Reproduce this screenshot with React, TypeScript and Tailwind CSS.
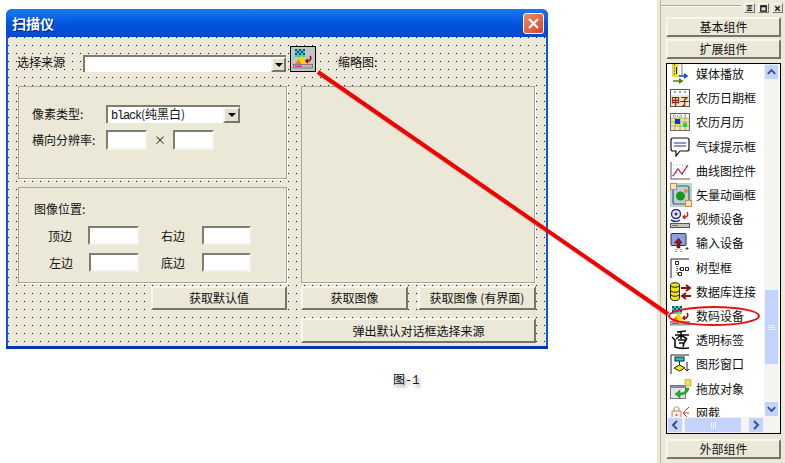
const font = "font-['Noto_Sans_CJK_SC','Liberation_Sans',sans-serif]"

function Sunken({ className }: { className: string }) {
  return <div className={`bg-white border-2 border-t-[#7f7d72] border-l-[#7f7d72] border-r-[#f4f2ea] border-b-[#f4f2ea] ${className}`} />
}

function Btn({ label, className }: { label: string; className: string }) {
  return (
    <div className={`flex items-center justify-center bg-[#ebe8d8] border-2 border-t-[#f7f6f0] border-l-[#f7f6f0] border-r-[#77756a] border-b-[#77756a] text-xs text-[#111] ${className}`}>
      {label}
    </div>
  )
}

function DropArrow({ className }: { className: string }) {
  return (
    <div className={`flex items-center justify-center bg-[#e4e1d2] border-2 border-t-[#f7f6f0] border-l-[#f7f6f0] border-r-[#77756a] border-b-[#77756a] ${className}`}>
      <div className="w-0 h-0 border-x-[4px] border-x-transparent border-t-[4px] border-t-black" />
    </div>
  )
}

function DeviceIcon({ size = 20 }: { size?: number }) {
  return (
    <svg width={size} height={size} viewBox="0 0 20 20">
      <rect x="2" y="0" width="10" height="8" fill="#22d3d3" />
      <path d="M2 0h2v2H2zM6 0h2v2H6zM10 0h2v2h-2zM4 2h2v2H4zM8 2h2v2H8zM2 4h2v2H2zM6 4h2v2H6zM10 4h2v2h-2z" fill="#2a4a5a" />
      <path d="M2 15 L9 6 L13 15 Z" fill="#ffd800" />
      <path d="M2 15 L6 10 L8 15 Z" fill="#f08020" />
      <path d="M17 7 q2 3 -1 5 h-3 m2 -2 l-2 2 l2 2" fill="none" stroke="#a01010" strokeWidth="1.6" />
      <rect x="0.500" y="15.500" width="19" height="3.500" fill="#b9b9b9" stroke="#555" strokeWidth="0.6" />
      <rect x="2" y="16.500" width="7" height="1.500" fill="#ff20c0" />
    </svg>
  )
}

function ListIcon({ name }: { name: string }) {
  if (name === 'media')
    return (
      <svg width="20" height="22" viewBox="0 0 20 22">
        <path d="M3 0h7l2 2v11H3z" fill="#fff" stroke="#555" strokeWidth="0.7" />
        <rect x="3" y="0" width="5" height="14" fill="#f5e60a" />
        <path d="M4 2h1M4 5h1M4 8h1M4 11h1M6.500 4v7" stroke="#222" />
        <path d="M9 13h7m-2-2l3 2-3 2" fill="none" stroke="#1a4fd8" strokeWidth="1.6" />
        <path d="M3 18h8m-2-2l3 2-3 2" fill="none" stroke="#5a7d10" strokeWidth="1.6" />
      </svg>
    )
  if (name === 'date')
    return (
      <svg width="20" height="18" viewBox="0 0 20 18">
        <rect x="0.500" y="0.500" width="19" height="17" fill="#f3e7c4" stroke="#555" />
        <rect x="1" y="1" width="18" height="5" fill="#fff" />
        <path d="M4 3h2M9 3h2M14 3h2" stroke="#1a3fb0" />
        <text x="10" y="15.500" textAnchor="middle" fontSize="9" fontWeight="700" fill="#8a1010" fontFamily="Noto Sans CJK SC">甲子</text>
      </svg>
    )
  if (name === 'month')
    return (
      <svg width="20" height="18" viewBox="0 0 20 18">
        <rect x="0.500" y="0.500" width="19" height="17" fill="#f5e98c" stroke="#666" />
        <rect x="1" y="1" width="18" height="4" fill="#fff" />
        <path d="M3 3h1M7 3h1M11 3h1M15 3h1" stroke="#1a3fb0" />
        <path d="M1 5h18M1 9h18M1 13h18M5 1v16M10 1v16M15 1v16" stroke="#8f8f8f" strokeWidth="0.7" />
        <rect x="5" y="6" width="5" height="5" fill="#1a2fd8" />
        <rect x="13" y="10" width="4" height="4" fill="#22d34a" />
      </svg>
    )
  if (name === 'balloon')
    return (
      <svg width="20" height="20" viewBox="0 0 20 20">
        <path d="M3 1h14q2 0 2 2v9q0 2-2 2H10l-4 5v-5H3q-2 0-2-2V3q0-2 2-2z" fill="#fff" stroke="#111" strokeWidth="1.200" />
        <path d="M4 6h12M4 9h12" stroke="#1a2fb0" strokeWidth="1.200" />
      </svg>
    )
  if (name === 'curve')
    return (
      <svg width="20" height="18" viewBox="0 0 20 18">
        <path d="M1 0v17h19" fill="none" stroke="#555" />
        <path d="M3 3h15M3 7h15M3 11h15" stroke="#bbb" strokeDasharray="1 2" />
        <path d="M3 14l5-7 4 5 6-9" fill="none" stroke="#e02020" strokeWidth="1.200" />
        <path d="M3 14l5-7M12 12l6-9" fill="none" stroke="#2040d0" strokeDasharray="1 3" strokeWidth="1.500" />
      </svg>
    )
  if (name === 'vector')
    return (
      <svg width="22" height="24" viewBox="0 0 22 24">
        <rect width="22" height="24" fill="#c6ccd0" />
        <path d="M5 3h12q2 0 2 2v14M17 21H5q-2 0-2-2V6" fill="none" stroke="#2a6a80" strokeWidth="1.200" />
        <rect x="0.500" y="0.500" width="6" height="6" fill="#e8e4d0" stroke="#d88a20" />
        <rect x="15.500" y="17.500" width="6" height="6" fill="#e8e4d0" stroke="#d88a20" />
        <circle cx="10.500" cy="13" r="4.500" fill="#129a1c" />
        <circle cx="16" cy="8" r="2" fill="#f08050" />
      </svg>
    )
  if (name === 'video')
    return (
      <svg width="20" height="20" viewBox="0 0 20 20">
        <circle cx="6" cy="5" r="4.500" fill="#e8e8f0" stroke="#1a2fa0" strokeWidth="1.400" />
        <circle cx="6" cy="5" r="1.500" fill="#333" />
        <path d="M1 11q5 3 9 0" fill="none" stroke="#1a2fa0" strokeWidth="1.500" />
        <path d="M17 3q2 3-1 5h-3m2-2l-2 2 2 2" fill="none" stroke="#c02010" strokeWidth="1.300" />
        <rect x="0.500" y="14.500" width="19" height="4" fill="#c4c4c4" stroke="#555" />
        <rect x="2" y="16" width="6" height="1" fill="#ff20c0" />
      </svg>
    )
  if (name === 'input')
    return (
      <svg width="20" height="20" viewBox="0 0 20 20">
        <rect x="1" y="0.500" width="15" height="12" rx="1" fill="#8f9ee8" stroke="#333" />
        <path d="M8.500 5l-4 5h2.500v5h3v-5H12z" fill="#a01010" stroke="#111" strokeWidth="0.500" />
        <path d="M6 16v1M6 18v1M11 16v1M11 18v1M17 14v3M15.500 15.500h3" stroke="#444" />
      </svg>
    )
  if (name === 'tree')
    return (
      <svg width="20" height="20" viewBox="0 0 20 20">
        <path d="M1 20V1h18" fill="none" stroke="#222" />
        <path d="M7 6v10M7 11h6M7 16h2" stroke="#222" strokeDasharray="1 1" />
        <path d="M5.500 3.500h3v3h-3zM10.500 9.500h3v3h-3zM15.500 9.500h3v3h-3zM8.500 14.500h3v3h-3z" fill="#fff" stroke="#222" />
      </svg>
    )
  if (name === 'db')
    return (
      <svg width="22" height="20" viewBox="0 0 22 20">
        <path d="M0.500 3v13c0 3.500 9 3.500 9 0V3z" fill="#f5e60a" stroke="#222" />
        <ellipse cx="5" cy="3" rx="4.500" ry="2.200" fill="#f5e60a" stroke="#222" />
        <path d="M0.500 8c0 3 9 3 9 0M0.500 12c0 3 9 3 9 0" fill="none" stroke="#222" />
        <path d="M11 6h8m-3-3l4 3-4 3" fill="none" stroke="#901010" strokeWidth="2" />
        <path d="M21 14h-8m3-3l-4 3 4 3" fill="none" stroke="#901010" strokeWidth="2" />
      </svg>
    )
  if (name === 'device') return <DeviceIcon />
  if (name === 'label')
    return (
      <svg width="20" height="20" viewBox="0 0 20 20">
        <path d="M7 2l9-1M11 1v8M5 5h14M11 5l-5 4M11 5l6 4M8 10h8l-2 3M2 7l3 3v7q4 2 14 1M9 13h5l-1 4" fill="none" stroke="#111" strokeWidth="1.600" />
      </svg>
    )
  if (name === 'window')
    return (
      <svg width="20" height="20" viewBox="0 0 20 20">
        <path d="M1 20V1h18" fill="none" stroke="#222" />
        <rect x="5" y="3" width="9" height="4" fill="#18c8c8" stroke="#222" />
        <path d="M9.500 7v4" stroke="#222" />
        <path d="M4 14l5.500-3 5.500 3-5.500 3z" fill="#f5e60a" stroke="#222" />
        <path d="M17 8v9m-2-2l2 2 2-2" fill="none" stroke="#222" />
      </svg>
    )
  if (name === 'drag')
    return (
      <svg width="22" height="20" viewBox="0 0 22 20">
        <rect x="0.500" y="6.500" width="15" height="13" fill="#e4e4e4" stroke="#777" />
        <rect x="1" y="7" width="14" height="2" fill="#7f8ea8" />
        <path d="M15 0h5l1 1v6h-6z" fill="#f5e040" stroke="#888" strokeWidth="0.600" />
        <path d="M16 9q0 5-6 5v-3l-5 4 5 4v-3q8 0 9-7z" fill="#28b028" stroke="#1a6a1a" strokeWidth="0.500" />
      </svg>
    )
  return (
    <svg width="20" height="18" viewBox="0 0 20 18">
      <path d="M2 7h9v9H2z" fill="#f5efe0" stroke="#b09060" />
      <path d="M4 7V4q2.500-3 5 0v3" fill="none" stroke="#b09060" />
      <circle cx="6.500" cy="11" r="1" fill="#b06020" />
      <path d="M19 3l-6 6h6M13 9l6 6" fill="none" stroke="#e03030" />
    </svg>
  )
}

const items = [
  { name: 'media', label: '媒体播放' },
  { name: 'date', label: '农历日期框' },
  { name: 'month', label: '农历月历' },
  { name: 'balloon', label: '气球提示框' },
  { name: 'curve', label: '曲线图控件' },
  { name: 'vector', label: '矢量动画框' },
  { name: 'video', label: '视频设备' },
  { name: 'input', label: '输入设备' },
  { name: 'tree', label: '树型框' },
  { name: 'db', label: '数据库连接' },
  { name: 'device', label: '数码设备' },
  { name: 'label', label: '透明标签' },
  { name: 'window', label: '图形窗口' },
  { name: 'drag', label: '拖放对象' },
  { name: 'net', label: '网截' },
]

const windowGlyphs = ['M2 2h6M3 4.500h4M2 7h6', 'M2 2h6v6H2zM2 3h6', 'M2.500 2.500l5 5M7.500 2.500l-5 5']

function ScrollBtn({ dir, className }: { dir: 'up' | 'down' | 'left' | 'right'; className: string }) {
  const d = { up: 'M3 9l4-4 4 4', down: 'M3 5l4 4 4-4', left: 'M9 3L5 7l4 4', right: 'M5 3l4 4-4 4' }[dir]
  return (
    <div className={`flex items-center justify-center rounded-[2px] bg-[#c3d3fb] border border-[#eef3ff] ${className}`}>
      <svg width="14" height="14" viewBox="0 0 14 14">
        <path d={d} fill="none" stroke="#3a4f8a" strokeWidth="2" />
      </svg>
    </div>
  )
}

function Field({ label, labelClass, inputClass }: { label: string; labelClass: string; inputClass: string }) {
  return (
    <div className="flex items-center">
      <span className={`text-xs ${labelClass}`}>{label}</span>
      <Sunken className={inputClass} />
    </div>
  )
}

export default function App() {
  return (
    <div className={`relative flex w-[785px] h-[463px] overflow-hidden bg-white text-[#111] ${font}`}>
      <div className="w-[657px] shrink-0 pl-[6px] pt-[9px]">
        {/* dialog */}
        <div className="w-[542px] h-[340px] flex flex-col rounded-t-[6px] overflow-hidden bg-[#0a58e0]">
          <div className="h-[28px] shrink-0 flex items-center justify-between pl-[6px] pr-[4px] bg-gradient-to-b from-[#1c78f2] via-[#0256de] to-[#0048cc]">
            <span className="text-sm font-bold text-white [text-shadow:1px_1px_0_#00258a]">扫描仪</span>
            <div className="w-[21px] h-[21px] rounded-[3px] border border-white bg-gradient-to-br from-[#ee8a6a] to-[#d8401c] flex items-center justify-center">
              <svg width="13" height="13" viewBox="0 0 13 13">
                <path d="M2 2l9 9M11 2l-9 9" stroke="#fff" strokeWidth="2.200" />
              </svg>
            </div>
          </div>
          <div className="mx-[2px] h-[309px] pl-[10px] bg-[#ebe8da] bg-[radial-gradient(circle_at_0.5px_0.5px,#111_0.5px,transparent_0.7px)] bg-[length:8px_8px]">
            {/* source row */}
            <div className="flex items-end h-[26px] mt-[9px]">
              <span className="w-[65px] h-[18px] -ml-[1px] text-xs">选择来源</span>
              <div className="flex w-[203px] h-[17px] ml-[1px] bg-white border-t-2 border-l-2 border-t-[#7f7d72] border-l-[#7f7d72] justify-end">
                <DropArrow className="w-[15px] h-[15px]" />
              </div>
              <div className="ml-[4px] w-[26px] h-[26px] border border-black bg-[#c4c4c4] flex items-center justify-center">
                <DeviceIcon />
              </div>
              <span className="ml-[22px] h-[18px] text-xs">缩略图:</span>
            </div>
            {/* middle */}
            <div className="flex gap-[14px] mt-[14px]">
              <div className="w-[269px] flex flex-col gap-[8px]">
                <div className="h-[93px] pl-[13px] pt-[18px] bg-[#ebe8d8] border border-[#a8a698] shadow-[1px_1px_0_#fff]">
                  <div className="flex items-center h-[18px]">
                    <span className="w-[74px] text-xs">像素类型:</span>
                    <div className="flex items-center justify-between w-[134px] h-[18px] bg-white border-t-2 border-l-2 border-t-[#7f7d72] border-l-[#7f7d72] pl-[3px] text-xs">
                      <span><span className="font-['Liberation_Mono',monospace] tracking-[-1.2px]">black</span>(纯黑白)</span>
                      <DropArrow className="w-[17px] h-[16px]" />
                    </div>
                  </div>
                  <div className="flex items-center h-[20px] mt-[7px]">
                    <span className="w-[74px] text-xs">横向分辨率:</span>
                    <Sunken className="w-[41px] h-[20px]" />
                    <span className="w-[26px] text-center text-xs text-[#333]">×</span>
                    <Sunken className="w-[41px] h-[20px]" />
                  </div>
                </div>
                <div className="h-[96px] pl-[15px] pt-[12px] bg-[#ebe8d8] border border-[#a8a698] shadow-[1px_1px_0_#fff]">
                  <div className="text-xs leading-[18px]">图像位置:</div>
                  <div className="flex h-[19px] mt-[8px] pl-[14px]">
                    <Field label="顶边" labelClass="w-[40px]" inputClass="w-[51px] h-[19px]" />
                    <div className="ml-[22px]">
                      <Field label="右边" labelClass="w-[41px]" inputClass="w-[49px] h-[19px]" />
                    </div>
                  </div>
                  <div className="flex h-[19px] mt-[8px] pl-[15px]">
                    <Field label="左边" labelClass="w-[40px]" inputClass="w-[50px] h-[19px]" />
                    <div className="ml-[22px]">
                      <Field label="底边" labelClass="w-[41px]" inputClass="w-[49px] h-[19px]" />
                    </div>
                  </div>
                </div>
              </div>
              <div className="w-[234px] h-[197px] bg-[#ebe8d8] border border-[#a8a698] shadow-[1px_1px_0_#fff]" />
            </div>
            {/* buttons */}
            <div className="flex mt-[3px] ml-[133px]">
              <Btn label="获取默认值" className="w-[136px] h-[24px]" />
              <Btn label="获取图像" className="ml-[14px] w-[107px] h-[24px]" />
              <Btn label="获取图像 (有界面)" className="ml-[10px] w-[118px] h-[24px]" />
            </div>
            <Btn label="弹出默认对话框选择来源" className="mt-[8px] ml-[283px] w-[235px] h-[25px]" />
          </div>
          <div className="flex-1 bg-[#0036b4]" />
        </div>
        <div className="mt-[22px] ml-[387px] text-xs [text-shadow:2px_3px_3px_#999]">
          图<span className="font-['Liberation_Mono',monospace]">-1</span>
        </div>
      </div>

      {/* component panel */}
      <div className="flex-1 flex bg-[#ece9d8] pl-[3px]">
        <div className="flex-1 flex flex-col border-l border-[#bdbaab] pl-[5px] pr-[4px]">
          <div className="h-[17px] shrink-0 flex items-start pt-[3px] gap-[3px] -ml-[5px] -mr-[2px]">
            <div className="flex-1 h-[2px] mt-[2px] border-t border-t-[#aaa797] border-b border-b-white" />
            {windowGlyphs.map((d) => (
              <div key={d} className="w-[11px] h-[10px] flex items-center justify-center bg-[#e4e1d2] border border-t-[#fff] border-l-[#fff] border-r-[#77756a] border-b-[#77756a]">
                <svg width="9" height="9" viewBox="0 0 10 10">
                  <path d={d} fill="none" stroke="#111" strokeWidth="1.400" />
                </svg>
              </div>
            ))}
          </div>
          <Btn label="基本组件" className="h-[20px] shrink-0" />
          <Btn label="扩展组件" className="h-[20px] mt-[2px] shrink-0" />
          <div className="mt-[4px] h-[371px] flex flex-col border border-black bg-white">
            <div className="flex flex-1 min-h-0 pr-[1px]">
              <div className="flex-1 pl-[3px] flex flex-col overflow-hidden">
                <div className="-mt-[2px] flex flex-col">
                  {items.map((it) => (
                    <div key={it.name} className="h-[24.2px] shrink-0 flex items-center">
                      <div className="w-[26px] flex justify-start"><ListIcon name={it.name} /></div>
                      <span className="text-xs whitespace-nowrap">{it.label}</span>
                    </div>
                  ))}
                </div>
              </div>
              <div className="w-[15px] shrink-0 flex flex-col bg-[#f5f4f0]">
                <ScrollBtn dir="up" className="h-[16px]" />
                <div className="flex-1 flex flex-col justify-end">
                  <div className="h-[76px] mb-[36px] rounded-[2px] bg-[#c3d3fb] border border-[#eef3ff] flex flex-col items-center justify-center gap-[1px]">
                    <div className="w-[7px] h-[1px] bg-[#eef3ff]" />
                    <div className="w-[7px] h-[1px] bg-[#eef3ff]" />
                    <div className="w-[7px] h-[1px] bg-[#eef3ff]" />
                  </div>
                </div>
                <ScrollBtn dir="down" className="h-[16px]" />
              </div>
            </div>
            <div className="h-[16px] shrink-0 flex bg-[#f5f4f0] pr-[16px]">
              <ScrollBtn dir="left" className="w-[16px]" />
              <div className="w-[58px] ml-[1px] rounded-[2px] bg-[#c3d3fb] border border-[#eef3ff] flex items-center justify-center gap-[1px]">
                <div className="w-[1px] h-[7px] bg-[#eef3ff]" />
                <div className="w-[1px] h-[7px] bg-[#eef3ff]" />
                <div className="w-[1px] h-[7px] bg-[#eef3ff]" />
              </div>
              <div className="flex-1" />
              <ScrollBtn dir="right" className="w-[16px]" />
            </div>
          </div>
          <Btn label="外部组件" className="mt-[5px] h-[20px] shrink-0" />
        </div>
      </div>

      {/* annotation */}
      <svg className="absolute inset-0 pointer-events-none" width="785" height="463" viewBox="0 0 785 463">
        <path d="M318 72 L668 314" stroke="#000" strokeOpacity="0.15" strokeWidth="4" transform="translate(1 2)" />
        <path d="M318 72 L668 314" stroke="#f00000" strokeWidth="4" />
        <ellipse cx="714" cy="316" rx="45" ry="9" fill="none" stroke="#e81010" strokeWidth="2" />
      </svg>
    </div>
  )
}
